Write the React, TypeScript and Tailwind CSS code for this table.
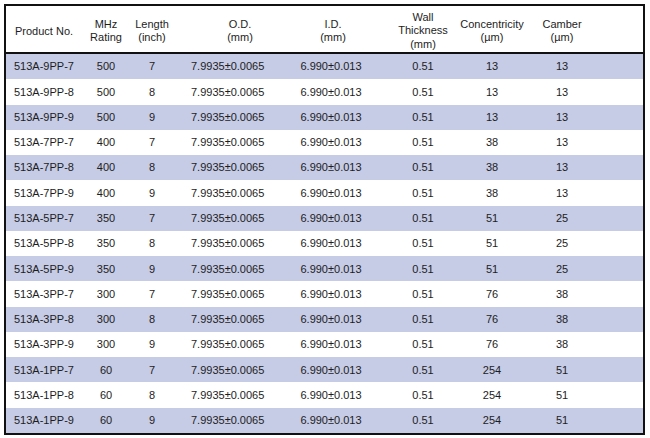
const SERIES = [
  { code: "9PP", mhz: "500", conc: "13", camber: "13" },
  { code: "7PP", mhz: "400", conc: "38", camber: "13" },
  { code: "5PP", mhz: "350", conc: "51", camber: "25" },
  { code: "3PP", mhz: "300", conc: "76", camber: "38" },
  { code: "1PP", mhz: "60", conc: "254", camber: "51" },
];

const ROWS = SERIES.flatMap((s) =>
  ["7", "8", "9"].map((len) => ({
    product: `513A-${s.code}-${len}`,
    mhz: s.mhz,
    length: len,
    od: "7.9935±0.0065",
    id: "6.990±0.013",
    wall: "0.51",
    conc: s.conc,
    camber: s.camber,
  }))
);

const GRID = "grid grid-cols-[80px_40px_52px_124px_62px_118px_20px_120px_21px]";

function Cell({ children, className = "" }: { children?: React.ReactNode; className?: string }) {
  return <div className={`flex min-w-0 items-center justify-center whitespace-nowrap ${className}`}>{children}</div>;
}

function Head({ lines }: { lines: string[] }) {
  return (
    <Cell>
      <div className="text-center leading-[13.5px]">
        {lines.map((l) => (
          <div key={l}>{l}</div>
        ))}
      </div>
    </Cell>
  );
}

export default function App() {
  return (
    <div className="h-[438px] w-[650px] bg-white pl-[4px] pt-[4px] font-['Liberation_Sans',Arial,sans-serif] text-[11px] text-[#1d1d1d]">
      <div className="w-[641px] border-2 border-[#111]">
        <div className={`${GRID} h-[48px] border-b-2 border-[#111] pt-[4px]`}>
          <Cell className="justify-start pl-[9px]">Product No.</Cell>
          <Head lines={["MHz", "Rating"]} />
          <Head lines={["Length", "(inch)"]} />
          <Head lines={["O.D.", "(mm)"]} />
          <Head lines={["I.D.", "(mm)"]} />
          <Head lines={["Wall", "Thickness", "(mm)"]} />
          <Head lines={["Concentricity", "(µm)"]} />
          <Head lines={["Camber", "(µm)"]} />
          <div />
        </div>
        <div className="flex h-[379px] flex-col">
          {ROWS.map((r, i) => (
            <div key={r.product} className={`${GRID} flex-1 ${i % 2 === 0 ? "bg-[#c6cbe6]" : "bg-white"}`}>
              <Cell className="justify-start pl-[8px]">{r.product}</Cell>
              <Cell>{r.mhz}</Cell>
              <Cell>{r.length}</Cell>
              <Cell className="justify-start pl-[13px]">{r.od}</Cell>
              <Cell className="pr-[4px]">{r.id}</Cell>
              <Cell>{r.wall}</Cell>
              <Cell>{r.conc}</Cell>
              <Cell>{r.camber}</Cell>
              <div />
            </div>
          ))}
        </div>
      </div>
    </div>
  );
}
